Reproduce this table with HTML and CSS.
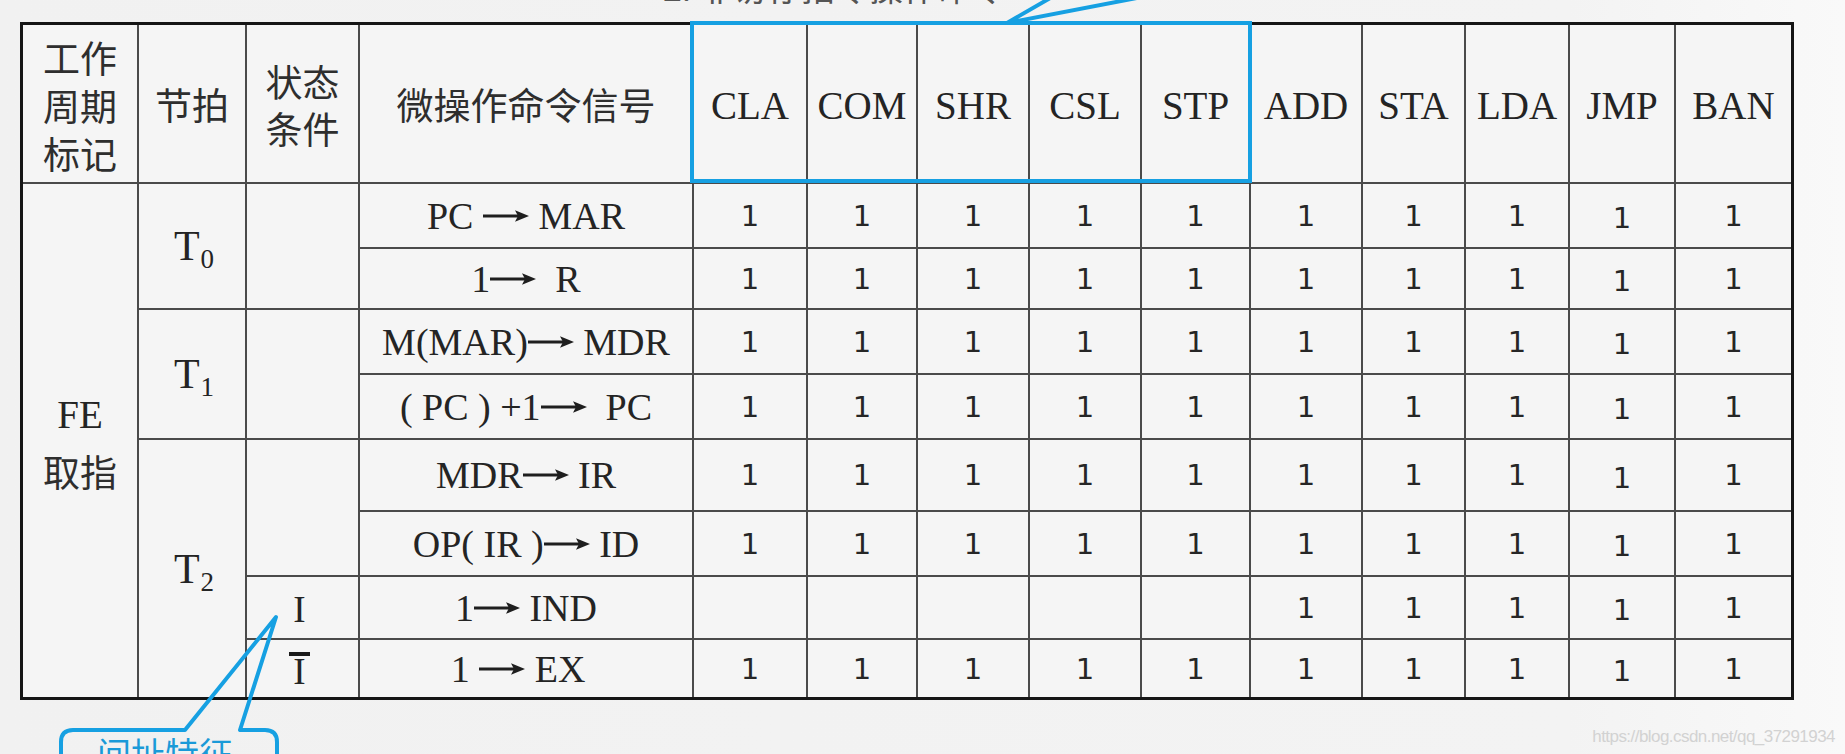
FILE: index.html
```html
<!DOCTYPE html>
<html lang="zh-CN">
<head>
<meta charset="utf-8">
<title>取指周期微操作命令</title>
<link rel="stylesheet" href="styles.css">
</head>
<body>
<div class="stage">
  <div class="note-top">2. 非访存指令操作命令</div>

  <div class="sheet">
    <div class="c cn h1"><span>工作<br>周期<br>标记</span></div>
    <div class="c cn">节拍</div>
    <div class="c cn h3"><span>状态<br>条件</span></div>
    <div class="c cn">微操作命令信号</div>
    <div class="c en hd">CLA</div>
    <div class="c en hd">COM</div>
    <div class="c en hd">SHR</div>
    <div class="c en hd">CSL</div>
    <div class="c en hd">STP</div>
    <div class="c en hd">ADD</div>
    <div class="c en hd">STA</div>
    <div class="c en hd">LDA</div>
    <div class="c en hd">JMP</div>
    <div class="c en hd">BAN</div>

    <!-- row: PC -> MAR -->
    <div class="c fe span8"><div class="fe-l en">FE</div><div class="fe-l cn">取指</div></div>
    <div class="c en tk span2"><span>T<sub>0</sub></span></div>
    <div class="c span2"></div>
    <div class="c op"><span>PC <svg class="arr" viewBox="0 0 46 14"><path d="M0 5.6h36v2.8H0z"/><path d="M32 1.2 46 7 32 12.8 35 7z"/></svg> MAR</span></div>
    <div class="c v">1</div><div class="c v">1</div><div class="c v">1</div><div class="c v">1</div><div class="c v">1</div>
    <div class="c v">1</div><div class="c v">1</div><div class="c v">1</div><div class="c v lo">1</div><div class="c v">1</div>

    <!-- row: 1 -> R -->
    <div class="c op"><span>1<svg class="arr" viewBox="0 0 46 14"><path d="M0 5.6h36v2.8H0z"/><path d="M32 1.2 46 7 32 12.8 35 7z"/></svg>  R</span></div>
    <div class="c v">1</div><div class="c v">1</div><div class="c v">1</div><div class="c v">1</div><div class="c v">1</div>
    <div class="c v">1</div><div class="c v">1</div><div class="c v">1</div><div class="c v lo">1</div><div class="c v">1</div>

    <!-- row: M(MAR) -> MDR -->
    <div class="c en tk span2"><span>T<sub>1</sub></span></div>
    <div class="c span2"></div>
    <div class="c op"><span>M(MAR)<svg class="arr" viewBox="0 0 46 14"><path d="M0 5.6h36v2.8H0z"/><path d="M32 1.2 46 7 32 12.8 35 7z"/></svg> MDR</span></div>
    <div class="c v">1</div><div class="c v">1</div><div class="c v">1</div><div class="c v">1</div><div class="c v">1</div>
    <div class="c v">1</div><div class="c v">1</div><div class="c v">1</div><div class="c v lo">1</div><div class="c v">1</div>

    <!-- row: (PC)+1 -> PC -->
    <div class="c op"><span>( PC ) +1<svg class="arr" viewBox="0 0 46 14"><path d="M0 5.6h36v2.8H0z"/><path d="M32 1.2 46 7 32 12.8 35 7z"/></svg>  PC</span></div>
    <div class="c v">1</div><div class="c v">1</div><div class="c v">1</div><div class="c v">1</div><div class="c v">1</div>
    <div class="c v">1</div><div class="c v">1</div><div class="c v">1</div><div class="c v lo">1</div><div class="c v">1</div>

    <!-- row: MDR -> IR -->
    <div class="c en tk span4"><span>T<sub>2</sub></span></div>
    <div class="c span2"></div>
    <div class="c op"><span>MDR<svg class="arr" viewBox="0 0 46 14"><path d="M0 5.6h36v2.8H0z"/><path d="M32 1.2 46 7 32 12.8 35 7z"/></svg> IR</span></div>
    <div class="c v">1</div><div class="c v">1</div><div class="c v">1</div><div class="c v">1</div><div class="c v">1</div>
    <div class="c v">1</div><div class="c v">1</div><div class="c v">1</div><div class="c v lo">1</div><div class="c v">1</div>

    <!-- row: OP(IR) -> ID -->
    <div class="c op"><span>OP( IR )<svg class="arr" viewBox="0 0 46 14"><path d="M0 5.6h36v2.8H0z"/><path d="M32 1.2 46 7 32 12.8 35 7z"/></svg> ID</span></div>
    <div class="c v">1</div><div class="c v">1</div><div class="c v">1</div><div class="c v">1</div><div class="c v">1</div>
    <div class="c v">1</div><div class="c v">1</div><div class="c v">1</div><div class="c v lo">1</div><div class="c v">1</div>

    <!-- row: 1 -> IND -->
    <div class="c en cond cond-i">I</div>
    <div class="c op"><span>1<svg class="arr" viewBox="0 0 46 14"><path d="M0 5.6h36v2.8H0z"/><path d="M32 1.2 46 7 32 12.8 35 7z"/></svg> IND</span></div>
    <div class="c"></div><div class="c"></div><div class="c"></div><div class="c"></div><div class="c"></div>
    <div class="c v">1</div><div class="c v">1</div><div class="c v">1</div><div class="c v lo">1</div><div class="c v">1</div>

    <!-- row: 1 -> EX -->
    <div class="c en cond"><span class="bar">I</span></div>
    <div class="c op op-ex"><span>1 <svg class="arr" viewBox="0 0 46 14"><path d="M0 5.6h36v2.8H0z"/><path d="M32 1.2 46 7 32 12.8 35 7z"/></svg> EX</span></div>
    <div class="c v">1</div><div class="c v">1</div><div class="c v">1</div><div class="c v">1</div><div class="c v">1</div>
    <div class="c v">1</div><div class="c v">1</div><div class="c v">1</div><div class="c v lo">1</div><div class="c v">1</div>
  </div>

  <div class="hl"></div>

  <svg class="callouts" viewBox="0 0 1845 754" width="1845" height="754">
    <polyline points="1052,-3 1007,23 1142,-3" />
    <path d="M61 760 V742 Q61 730 73 730 H185 L276 617 L240 730 H265 Q277 730 277 742 V760" />
  </svg>
  <div class="note-bottom">间址特征</div>

  <div class="wm">https://blog.csdn.net/qq_37291934</div>
</div>
</body>
</html>
```

FILE: styles.css
```css
* { box-sizing: border-box; }

html, body {
  margin: 0;
  padding: 0;
}

body {
  width: 1845px;
  height: 754px;
  overflow: hidden;
  background: #f2f2f2;
}

.stage {
  position: relative;
  width: 1845px;
  height: 754px;
  overflow: hidden;
  padding: 22px 0 0 20px;
  background: linear-gradient(90deg, #f1f1f1 0%, #f3f3f3 85%, #f9f9f9 100%);
}

.sheet {
  display: grid;
  width: fit-content;
  grid-template-columns: 114px 106px 111px 332px 112px 108px 110px 110px 107px 110px 101px 102px 104px 115px;
  grid-template-rows: 157px 63px 59px 63px 63px 70px 63px 61px 57px;
  gap: 2px;
  background: #4a4a4a;
  border: 3px solid #151515;
}

.c {
  background: #f5f5f5;
  display: flex;
  align-items: center;
  justify-content: center;
  text-align: center;
  color: #242424;
}

.span2 { grid-row: span 2; }
.span4 { grid-row: span 4; }
.span8 { grid-row: span 8; }

.cn {
  font-family: "Noto Sans CJK SC", "Noto Sans CJK JP", sans-serif;
  font-size: 37px;
  color: #2e2e2e;
}

.h1 { line-height: 48px; padding-top: 2px; }
.h3 { line-height: 47px; padding-top: 2px; }

.en {
  font-family: "Liberation Serif", serif;
  font-size: 39px;
}

.hd { padding-top: 3px; }

.fe {
  flex-direction: column;
  padding-top: 4px;
}

.fe-l {
  height: 57px;
  line-height: 57px;
}

.tk {
  font-size: 42px;
  line-height: 42px;
  padding-left: 4px;
}

.tk sub {
  font-size: 27px;
  line-height: 0;
  vertical-align: -8px;
  margin-left: 1px;
}

.op {
  font-family: "Liberation Serif", serif;
  font-size: 38px;
  white-space: pre;
}

.op-ex { padding-right: 16px; }

.arr {
  width: 46px;
  height: 14px;
  vertical-align: 6px;
  fill: #1e1e1e;
}

.v {
  font-family: "DejaVu Sans", sans-serif;
  font-size: 29px;
  color: #262626;
}

.lo { padding-top: 5px; }

.cond {
  font-size: 37px;
  padding-right: 6px;
}

.cond-i { padding-top: 4px; }

.bar {
  display: inline-block;
  line-height: 26px;
  padding: 3px 4px 0;
  border-top: 4px solid #1a1a1a;
}

.hl {
  position: absolute;
  left: 690px;
  top: 21px;
  width: 562px;
  height: 162px;
  border: 4px solid #16a0e2;
}

.callouts {
  position: absolute;
  left: 0;
  top: 0;
  pointer-events: none;
  fill: none;
  stroke: #16a0e2;
  stroke-width: 4;
  stroke-linejoin: round;
}

.note-bottom {
  position: absolute;
  left: 97px;
  top: 736px;
  font-family: "Noto Sans CJK SC", sans-serif;
  font-size: 34px;
  line-height: 34px;
  color: #1a9ad8;
}

.note-top {
  position: absolute;
  left: 663px;
  top: -30px;
  font-family: "Noto Sans CJK SC", sans-serif;
  font-size: 34px;
  line-height: 34px;
  color: #555;
  white-space: nowrap;
}

.wm {
  position: absolute;
  right: 10px;
  top: 728px;
  font-family: "Liberation Sans", sans-serif;
  font-size: 17px;
  line-height: 17px;
  letter-spacing: -0.55px;
  color: #d2d2d2;
  white-space: nowrap;
}
```
